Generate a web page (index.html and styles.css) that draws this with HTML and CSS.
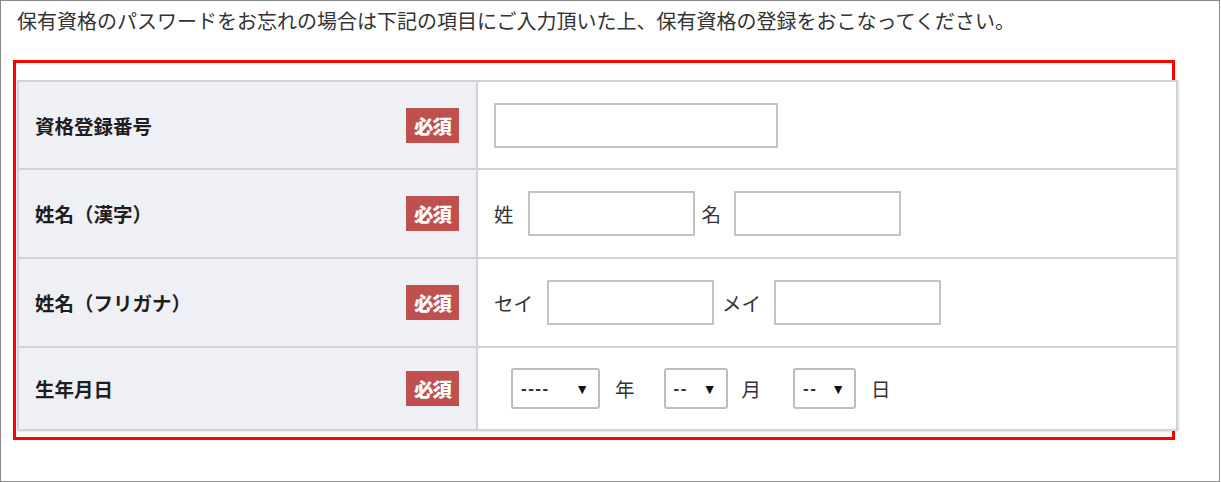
FILE: index.html
```html
<!DOCTYPE html>
<html lang="ja">
<head>
 <meta charset="UTF-8">
 <meta name="viewport" content="width=device-width, initial-scale=1.0">
 <title>保有資格の登録</title>
 <link rel="stylesheet" href="styles.css">
</head>
<body>
<div class="frame">
 <p class="lead">保有資格のパスワードをお忘れの場合は下記の項目にご入力頂いた上、保有資格の登録をおこなってください。</p>
 <div class="highlight">
   <div class="form-table">
     <div class="row row-1">
       <div class="label"><span>資格登録番号</span><span class="required">必須</span></div>
       <div class="field">
         <input type="text" class="input-long">
       </div>
     </div>
     <div class="row">
       <div class="label"><span>姓名（漢字）</span><span class="required">必須</span></div>
       <div class="field">
         <span class="caption">姓</span>
         <input type="text" class="input-name gap-first">
         <span class="caption gap-mid">名</span>
         <input type="text" class="input-name gap-second">
       </div>
     </div>
     <div class="row">
       <div class="label"><span>姓名（フリガナ）</span><span class="required">必須</span></div>
       <div class="field">
         <span class="caption">セイ</span>
         <input type="text" class="input-name gap-first">
         <span class="caption gap-mid2">メイ</span>
         <input type="text" class="input-name gap-second">
       </div>
     </div>
     <div class="row row-4">
       <div class="label"><span>生年月日</span><span class="required">必須</span></div>
       <div class="field">
         <div class="select select-year"><span class="dash">----</span><span class="arrow">▼</span></div>
         <span class="caption unit">年</span>
         <div class="select select-month"><span class="dash">--</span><span class="arrow">▼</span></div>
         <span class="caption unit">月</span>
         <div class="select select-day"><span class="dash">--</span><span class="arrow">▼</span></div>
         <span class="caption unit">日</span>
       </div>
     </div>
   </div>
 </div>
</div>
</body>
</html>
```

FILE: styles.css
```css
* {
  box-sizing: border-box;
}
body {
  margin: 0;
  padding: 0;
  background-color: #ffffff;
  font-family: "Noto Sans CJK JP", "Noto Sans", sans-serif;
  color: #333333;
}
.frame {
  width: 1220px;
  height: 482px;
  border: 1px solid #8a8a8a;
  overflow: hidden;
}
.lead {
  margin: 0;
  height: 59px;
  padding-left: 16px;
  line-height: 40px;
  font-size: 20px;
  color: #333333;
}
.highlight {
  width: 1162px;
  margin-left: 12px;
  border: 3px solid #ff0000;
  padding: 17px 0 6px 1px;
}
.form-table {
  width: 1161px;
  border: 2px solid #d3d3d3;
  box-shadow: 1px 1px 2px rgba(0, 0, 0, 0.12);
  background-color: #ffffff;
}
.row {
  display: flex;
  height: 89px;
  border-top: 2px solid #d3d3d3;
}
.row-1 {
  height: 86px;
  border-top: none;
}
.row-4 {
  height: 83px;
}
.label {
  width: 459px;
  display: flex;
  align-items: center;
  padding-left: 16px;
  padding-right: 17px;
  background-color: #eff0f5;
  border-right: 2px solid #d3d3d3;
  font-size: 19.5px;
  font-weight: bold;
  color: #1e1e1e;
}
.required {
  margin-left: auto;
  width: 53px;
  height: 35px;
  line-height: 35px;
  text-align: center;
  background-color: #c0504d;
  color: #ffffff;
  font-size: 19.5px;
  font-weight: 900;
  letter-spacing: -1px;
}
.field {
  flex: 1;
  display: flex;
  align-items: center;
  padding-left: 16px;
  font-size: 19.5px;
  color: #333333;
}
input[type="text"] {
  height: 45px;
  border: 2px solid #c2c2c2;
  border-radius: 1px;
  background-color: #ffffff;
  font-size: 16px;
  padding: 0 8px;
}
.input-long {
  width: 284px;
}
.input-name {
  width: 167px;
}
.gap-first {
  margin-left: 14px;
}
.gap-mid {
  margin-left: 7px;
}
.gap-mid2 {
  margin-left: 8px;
}
.gap-second {
  margin-left: 13px;
}
.select {
  display: flex;
  align-items: center;
  justify-content: space-between;
  height: 41px;
  padding: 0 9px 0 8px;
  border: 2px solid #bdbdbd;
  border-radius: 3px;
  background-color: #ffffff;
  font-family: "Liberation Sans", Arial, sans-serif;
  color: #222222;
}
.select .dash {
  font-size: 17px;
  font-weight: bold;
  letter-spacing: 1.5px;
  color: #333333;
}
.select .arrow {
  font-size: 14px;
  color: #111111;
}
.select-year {
  width: 89px;
  margin-left: 17px;
}
.select-month {
  width: 64px;
  margin-left: 29px;
}
.select-day {
  width: 63px;
  margin-left: 32px;
}
.unit {
  margin-left: 15px;
}
.select-month + .unit {
  margin-left: 14px;
}
```
